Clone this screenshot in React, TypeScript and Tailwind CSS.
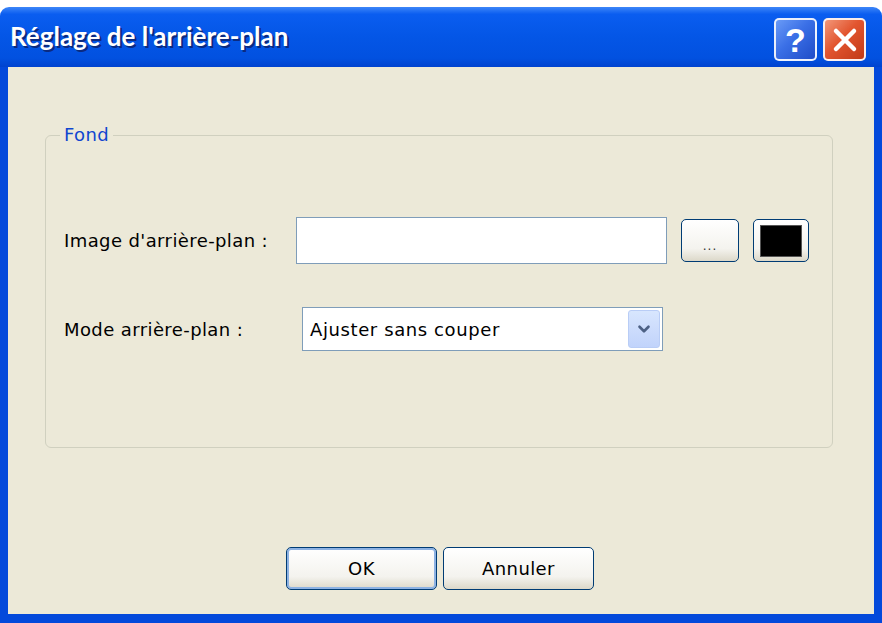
import { ChevronDown } from "lucide-react";

const ui = "font-['DejaVu_Sans',sans-serif]";

function TitleButton({ kind }: { kind: "help" | "close" }) {
  const bg =
    kind === "help"
      ? "bg-[linear-gradient(135deg,#6a9bf7_0%,#3a6fe6_45%,#1f4cc8_100%)]"
      : "bg-[linear-gradient(135deg,#f29779_0%,#e2552f_45%,#c13a18_100%)]";
  return (
    <div
      className={`flex h-[43px] w-[43px] items-center justify-center rounded-[5px] border-2 border-white/90 ${bg}`}
    >
      {kind === "help" ? (
        <span className="font-['Liberation_Sans',sans-serif] text-[34px] font-bold leading-none text-white">?</span>
      ) : (
        <svg width="26" height="26" viewBox="0 0 26 26">
          <path d="M4 4 L22 22 M22 4 L4 22" stroke="white" strokeWidth="4.5" strokeLinecap="round" />
        </svg>
      )}
    </div>
  );
}

function XpButton({ children, focused, className }: { children: React.ReactNode; focused?: boolean; className: string }) {
  return (
    <div
      className={`flex items-center justify-center rounded-[5px] border border-[#003c74] bg-[linear-gradient(#ffffff,#f4f3ee_70%,#dcd8c9)] ${
        focused ? "shadow-[inset_0_0_0_2px_#8db2e3]" : ""
      } ${className}`}
    >
      {children}
    </div>
  );
}

export default function App() {
  return (
    <div className={`flex h-[623px] w-[882px] flex-col bg-white pt-[7px] ${ui}`}>
      {/* Title bar */}
      <div className="flex h-[60px] items-start justify-between rounded-t-[9px] bg-[linear-gradient(#3d86f8_0%,#0a5df0_12%,#0456e6_50%,#0251e0_85%,#0043cf_100%)] pl-[10px] pr-[16px]">
        <div className="mt-[14px] font-['Lato',sans-serif] text-[26px] font-bold leading-[30px] text-white [text-shadow:2px_2px_0_#0b2a80]">
          Réglage de l'arrière-plan
        </div>
        <div className="mt-[11px] flex gap-[6px]">
          <TitleButton kind="help" />
          <TitleButton kind="close" />
        </div>
      </div>

      {/* Client area */}
      <div className="flex flex-1 flex-col border-x-[8px] border-b-[9px] border-[#0349db] bg-[#ece9d8] text-[18px] tracking-[0.4px] text-black">
        <div className="relative ml-[37px] mr-[41px] mt-[68px] h-[313px] rounded-[6px] border border-[#d0d0bf]">
          <span className="absolute left-[14px] top-[-14px] bg-[#ece9d8] px-[4px] leading-[26px] text-[#1046d0]">
            Fond
          </span>

          <div className="mt-[81px] flex items-center pl-[18px]">
            <span className="w-[232px]">Image d'arrière-plan :</span>
            <div className="h-[47px] w-[371px] border border-[#7f9db9] bg-white" />
            <XpButton className="ml-[14px] h-[43px] w-[58px]">
              <span className="mt-[10px] text-[12px] tracking-[1px] text-[#333]">...</span>
            </XpButton>
            <XpButton className="ml-[14px] h-[43px] w-[56px]">
              <div className="h-[32px] w-[42px] border border-[#555] bg-black" />
            </XpButton>
          </div>

          <div className="mt-[43px] flex items-center pl-[18px]">
            <span className="w-[238px]">Mode arrière-plan :</span>
            <div className="flex h-[44px] w-[361px] items-center justify-between border border-[#7f9db9] bg-white pl-[7px] pr-[2px]">
              <span className="tracking-[0.6px]">Ajuster sans couper</span>
              <div className="flex h-[38px] w-[32px] items-center justify-center rounded-[3px] border border-[#b9cdf6] bg-[linear-gradient(#d8e6fe,#c1d3fb)]">
                <ChevronDown size={18} strokeWidth={3.5} className="text-[#4d6185]" />
              </div>
            </div>
          </div>
        </div>

        <div className="mt-[99px] flex justify-center gap-[6px] pr-[2px]">
          <XpButton focused className="h-[43px] w-[151px]">
            <span>OK</span>
          </XpButton>
          <XpButton className="h-[43px] w-[151px]">
            <span>Annuler</span>
          </XpButton>
        </div>
      </div>
    </div>
  );
}
